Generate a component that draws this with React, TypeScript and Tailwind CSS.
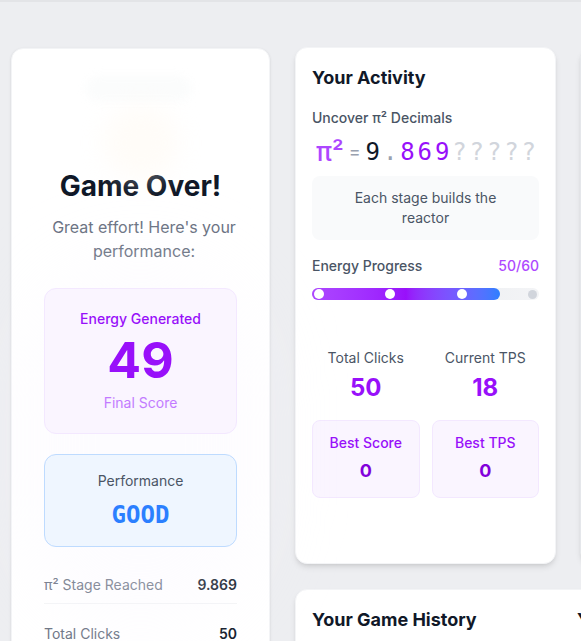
import React from "react";

const sans = { fontFamily: "Inter, 'Noto Sans', sans-serif" };
const mono = { fontFamily: "'DejaVu Sans Mono', 'Liberation Mono', monospace" };

export default function App() {
  return (
    <div
      className="relative h-[641px] w-[581px] overflow-hidden border-t-2 border-[#e3e4e7] bg-[#edeef1]"
      style={sans}
    >
      <div className="flex w-[900px] items-start gap-[25px] pl-[11px] pt-[45px]">
        {/* Left column: Game Over */}
        <div className="mt-px w-[259px] shrink-0 rounded-xl border border-gray-100 bg-white px-8 pb-10 shadow-sm">
          <div className="relative h-[119px]">
            <div className="absolute left-[42px] top-[27px] h-[25px] w-[105px] rounded-full bg-gray-100/30 blur-[4px]" />
            <div className="absolute left-[59px] top-[56px] h-[76px] w-[76px] rounded-full bg-orange-50/40 blur-md" />
          </div>
          <h1 className="text-center text-[28px] font-bold leading-9 text-gray-900">Game Over!</h1>
          <p className="mx-auto mt-[11px] w-[200px] text-center text-base leading-6 text-gray-500">
            Great effort! Here's your performance:
          </p>
          <div className="relative mt-[25px]">
            <div className="pointer-events-none absolute -left-6 -right-6 -top-6 bottom-[-80px] rounded-full bg-purple-50/30 blur-2xl" />
            <div className="relative rounded-xl border border-purple-100 bg-purple-50 px-5 pb-5 pt-5 text-center">
              <div className="text-sm font-medium leading-5 text-purple-600">Energy Generated</div>
              <div className="mt-[5px] text-[50px] font-bold leading-[52px] text-purple-600">49</div>
              <div className="mt-[7px] text-sm leading-5 text-purple-400">Final Score</div>
            </div>
            <div className="relative mt-5 rounded-xl border border-blue-200 bg-blue-50 pb-[15px] pt-4 text-center">
              <div className="text-sm leading-5 text-gray-600">Performance</div>
              <div className="mt-2 text-2xl font-bold leading-8 text-blue-500" style={mono}>
                GOOD
              </div>
            </div>
          </div>
          <div className="mt-5 space-y-3">
            <div className="flex items-center justify-between border-b border-gray-100 py-2 text-sm leading-5">
              <span className="text-gray-500">π² Stage Reached</span>
              <span className="font-semibold text-gray-900">9.869</span>
            </div>
            <div className="flex items-center justify-between border-b border-gray-100 py-2 text-sm leading-5">
              <span className="text-gray-500">Total Clicks</span>
              <span className="font-semibold text-gray-900">50</span>
            </div>
          </div>
        </div>

        {/* Right area: columns 2 & 3 */}
        <div className="flex w-[546px] shrink-0 flex-col gap-[25px]">
          <div className="flex items-start gap-[24px]">
            <div className="w-[261px] shrink-0 rounded-xl border border-gray-100 bg-white px-4 pb-[65px] pt-4 shadow-md">
              <h2 className="text-lg font-bold leading-7 text-gray-900">Your Activity</h2>
              <div className="mt-4 text-sm font-medium leading-5 text-gray-600">Uncover π² Decimals</div>
              <div className="mt-2 flex h-8 items-center whitespace-nowrap">
                <span className="ml-[4px] text-[26px] font-medium leading-8 text-purple-500">π²</span>
                <span className="mx-[5px] text-lg leading-8 text-gray-400">=</span>
                <span className="text-2xl leading-8 tracking-[0.12em]" style={mono}>
                  <span className="text-gray-900">9</span>
                  <span className="text-gray-400">.</span>
                  <span className="text-purple-600">869</span>
                  <span className="text-gray-300">?????</span>
                </span>
              </div>
              <div className="mt-2 rounded-lg bg-gray-50 px-6 py-3 text-center text-sm leading-5 text-gray-600">
                Each stage builds the reactor
              </div>
              <div className="mt-4 flex items-center justify-between text-sm leading-5">
                <span className="font-medium text-gray-600">Energy Progress</span>
                <span className="font-medium text-purple-500">50/60</span>
              </div>
              <div className="relative mt-3 h-3 w-full rounded-full bg-gradient-to-r from-gray-200 to-gray-100">
                <div className="h-3 w-[83%] rounded-full bg-gradient-to-r from-purple-500 via-purple-600 to-blue-500" />
                <div className="absolute inset-0 flex items-center justify-between px-[2px]">
                  <span className="h-[10px] w-[10px] rounded-full bg-white" />
                  <span className="h-[10px] w-[10px] rounded-full bg-white" />
                  <span className="h-[10px] w-[10px] rounded-full bg-white" />
                  <span className="h-[9px] w-[9px] rounded-full bg-gray-300" />
                </div>
              </div>
              <div className="mt-12 grid grid-cols-2 gap-3 text-center">
                <div>
                  <div className="text-sm leading-5 text-gray-600">Total Clicks</div>
                  <div className="mt-1 text-2xl font-bold leading-8 text-purple-600">50</div>
                </div>
                <div>
                  <div className="text-sm leading-5 text-gray-600">Current TPS</div>
                  <div className="mt-1 text-2xl font-bold leading-8 text-purple-600">18</div>
                </div>
              </div>
              <div className="mt-4 grid grid-cols-2 gap-3 text-center">
                <div className="rounded-lg border border-purple-100 bg-purple-50 p-3">
                  <div className="text-sm font-medium leading-5 text-purple-600">Best Score</div>
                  <div className="mt-1 text-lg font-bold leading-7 text-purple-700">0</div>
                </div>
                <div className="rounded-lg border border-purple-100 bg-purple-50 p-3">
                  <div className="text-sm font-medium leading-5 text-purple-600">Best TPS</div>
                  <div className="mt-1 text-lg font-bold leading-7 text-purple-700">0</div>
                </div>
              </div>
            </div>
            <div className="h-[516px] w-[261px] shrink-0 rounded-xl border border-gray-200 bg-white shadow-md" />
          </div>

          <div className="flex h-[200px] gap-[24px] rounded-xl border border-gray-100 bg-white pl-4 pt-4 shadow-md">
            <h2 className="w-[241px] shrink-0 text-lg font-bold leading-7 text-gray-900">Your Game History</h2>
            <h2 className="text-lg font-bold leading-7 text-gray-900">Your Stats</h2>
          </div>
        </div>
      </div>
    </div>
  );
}
